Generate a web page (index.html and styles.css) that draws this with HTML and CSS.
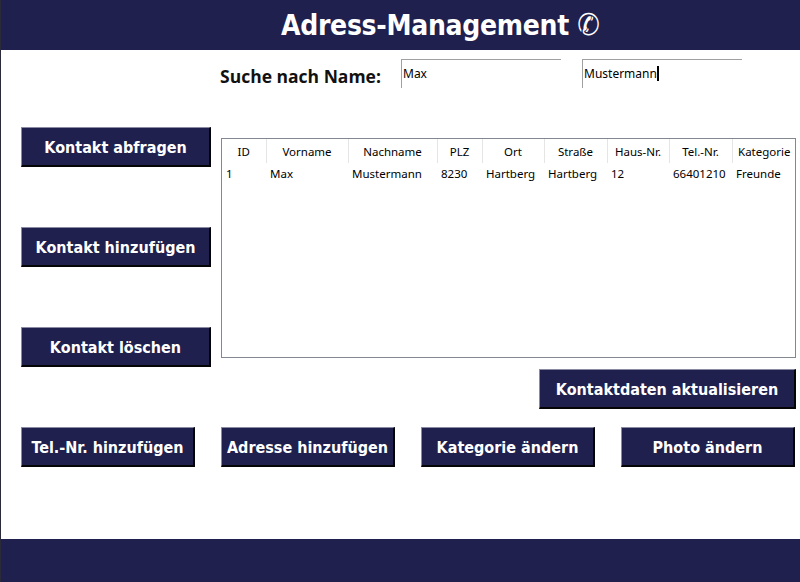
FILE: index.html
```html
<!DOCTYPE html>
<html lang="de">
<head>
<meta charset="utf-8">
<title>Adress-Management</title>
<link rel="stylesheet" href="styles.css">
</head>
<body>
<div class="app">
  <header class="header">
    <h1 class="title">Adress-Management <span class="phone">✆</span></h1>
  </header>
  <main class="main">
    <div class="search">
      <label class="search-label">Suche nach Name:</label>
      <div class="field">Max</div>
      <div class="field">Mustermann<span class="caret"></span></div>
    </div>
    <div class="content">
      <div class="side">
        <button class="btn btn-side">Kontakt abfragen</button>
        <button class="btn btn-side">Kontakt hinzufügen</button>
        <button class="btn btn-side">Kontakt löschen</button>
      </div>
      <div class="grid-box">
        <table class="grid">
          <colgroup>
            <col class="c-id"><col class="c-vor"><col class="c-nach"><col class="c-plz"><col class="c-ort"><col class="c-str"><col class="c-haus"><col class="c-tel"><col class="c-kat">
          </colgroup>
          <thead>
            <tr><th>ID</th><th>Vorname</th><th>Nachname</th><th>PLZ</th><th>Ort</th><th>Straße</th><th>Haus-Nr.</th><th>Tel.-Nr.</th><th>Kategorie</th></tr>
          </thead>
          <tbody>
            <tr><td>1</td><td>Max</td><td>Mustermann</td><td>8230</td><td>Hartberg</td><td>Hartberg</td><td>12</td><td>66401210</td><td>Freunde</td></tr>
          </tbody>
        </table>
      </div>
    </div>
    <div class="update-row">
      <button class="btn btn-update">Kontaktdaten aktualisieren</button>
    </div>
    <div class="bottom-row">
      <button class="btn btn-bottom">Tel.-Nr. hinzufügen</button>
      <button class="btn btn-bottom">Adresse hinzufügen</button>
      <button class="btn btn-bottom">Kategorie ändern</button>
      <button class="btn btn-bottom">Photo ändern</button>
    </div>
  </main>
  <footer class="footer"></footer>
</div>
</body>
</html>
```
FILE: styles.css
```css
html, body {
  margin: 0;
  padding: 0;
  background: #ffffff;
}
.app {
  width: 800px;
  height: 582px;
  display: flex;
  flex-direction: column;
  overflow: hidden;
  box-sizing: border-box;
  border-left: 1px solid #2a2a3a;
}
.header {
  height: 50px;
  background: #20204e;
  display: flex;
  align-items: center;
  justify-content: center;
  flex-shrink: 0;
}
.title {
  margin: 0 0 0 80px;
  color: #ffffff;
  font-family: "DejaVu Sans Condensed", "DejaVu Sans", sans-serif;
  font-stretch: condensed;
  font-weight: bold;
  font-size: 28px;
  letter-spacing: -0.3px;
  line-height: 50px;
}
.phone {
  font-weight: normal;
  font-size: 30px;
  letter-spacing: 0;
}
.main {
  flex: 1;
  padding-top: 9px;
}
.search {
  display: flex;
  align-items: flex-start;
  padding-left: 219px;
  height: 29px;
}
.search-label {
  width: 181px;
  padding-top: 5px;
  font-family: "Open Sans", sans-serif;
  font-weight: bold;
  font-size: 17.5px;
  color: #111111;
}
.field {
  width: 158px;
  height: 28px;
  border-top: 1px solid #a0a0a0;
  border-left: 1px solid #a0a0a0;
  margin-right: 21px;
  font-family: "Noto Sans", sans-serif;
  font-size: 12px;
  line-height: 27px;
  padding-left: 1px;
  color: #000000;
}
.caret {
  display: inline-block;
  width: 2px;
  height: 15px;
  background: #000000;
  vertical-align: -3px;
}
.content {
  display: flex;
  margin-top: 39px;
  padding-left: 20px;
}
.side {
  display: flex;
  flex-direction: column;
  gap: 60px;
  width: 190px;
}
.btn {
  box-sizing: border-box;
  height: 40px;
  background: #20204e;
  color: #ffffff;
  border-style: solid;
  border-width: 1px 2px 2px 1px;
  border-color: #8a8aa2 #050505 #050505 #8a8aa2;
  font-family: "DejaVu Sans Condensed", "DejaVu Sans", sans-serif;
  font-stretch: condensed;
  font-weight: bold;
  font-size: 16px;
  padding: 2px 0 0 0;
  margin: 0;
  display: flex;
  align-items: center;
  justify-content: center;
  white-space: nowrap;
}
.btn-side {
  width: 190px;
}
.grid-box {
  box-sizing: border-box;
  margin-top: 11px;
  margin-left: 10px;
  width: 575px;
  height: 220px;
  border: 1px solid #828790;
  background: #ffffff;
}
.grid {
  border-collapse: collapse;
  table-layout: fixed;
  width: 574px;
  font-family: "Noto Sans", sans-serif;
  font-size: 11.5px;
  color: #000000;
}
.c-id { width: 44px; }
.c-vor { width: 82px; }
.c-nach { width: 89px; }
.c-plz { width: 45px; }
.c-ort { width: 62px; }
.c-str { width: 63px; }
.c-haus { width: 62px; }
.c-tel { width: 63px; }
.c-kat { width: 64px; }
.grid th {
  font-weight: normal;
  text-align: center;
  height: 24px;
  padding: 0;
  border-right: 1px solid #e5e5e5;
  white-space: nowrap;
}
.grid th:last-child {
  border-right: none;
}
.grid td {
  text-align: left;
  padding: 0 0 0 4px;
  height: 20px;
  white-space: nowrap;
  overflow: hidden;
}
.update-row {
  display: flex;
  justify-content: flex-end;
  padding-right: 4px;
  margin-top: 2px;
}
.btn-update {
  width: 257px;
}
.bottom-row {
  display: flex;
  gap: 26px;
  padding-left: 20px;
  margin-top: 18px;
}
.btn-bottom {
  width: 174px;
}
.footer {
  height: 43px;
  background: #20204e;
  flex-shrink: 0;
}
```
